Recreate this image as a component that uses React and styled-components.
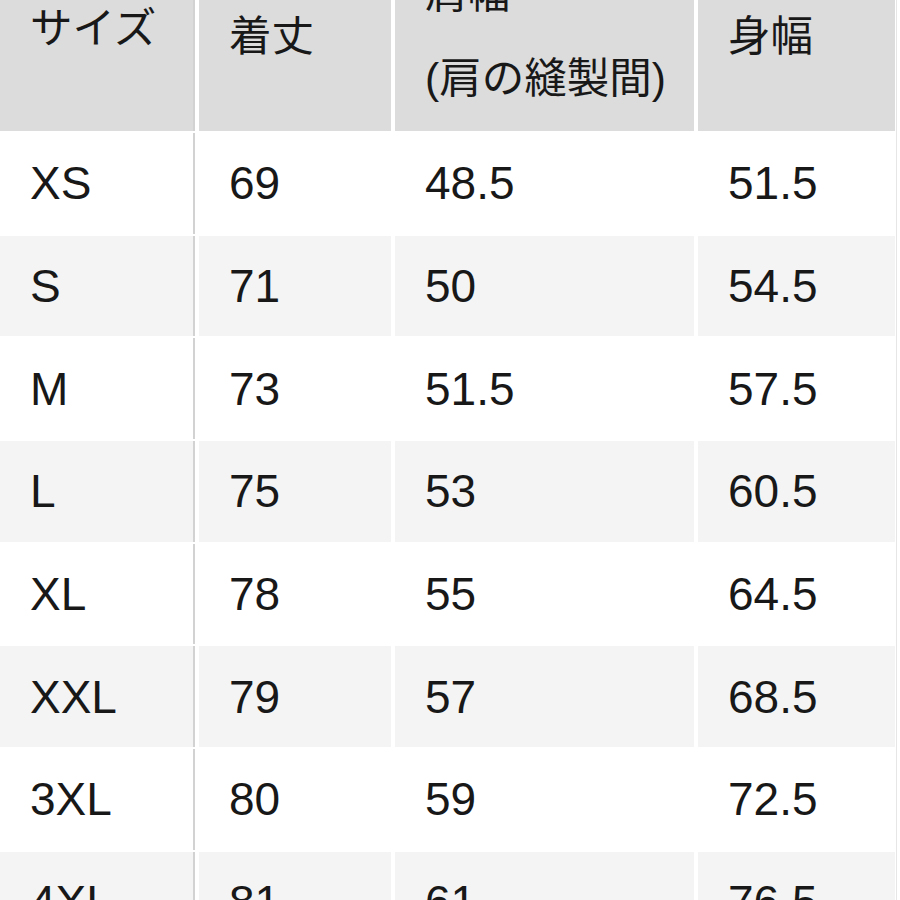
import React from "react";
import styled, { createGlobalStyle } from "styled-components";

const Global = createGlobalStyle`
  html, body { margin: 0; padding: 0; overflow: hidden; background: #ffffff; }
  body { font-family: "Liberation Sans", "Noto Sans CJK JP", sans-serif; color: #161616; }
`;

const Table = styled.div`
  display: grid;
  grid-template-columns: 195px 192px 299px 197px;
  column-gap: 4px;
  row-gap: 2px;
  width: max-content;
  margin-top: -59px;
  padding-right: 1px;
  border-right: 1px solid #e6e6e6;
`;

const HeadCell = styled.div`
  background: #dcdcdc;
  height: 190px;
  box-sizing: border-box;
  display: flex;
  flex-direction: column;
  justify-content: center;
  padding: 0 0 ${(p) => (p.$lift ? "16px" : "0")} 30px;
  font-family: "Liberation Sans", "Noto Sans CJK JP", sans-serif;
  font-size: 42.5px;
  line-height: 85px;
  white-space: nowrap;
  color: #181818;
  ${(p) => (p.$first ? "border-right: 2px solid #d2d2d2;" : "")}
`;

const Cell = styled.div`
  background: ${(p) => (p.$alt ? "#f4f4f4" : "#ffffff")};
  height: 100.7px;
  box-sizing: border-box;
  display: flex;
  align-items: center;
  padding-left: 30px;
  font-size: 46px;
  color: #181818;
  ${(p) => (p.$first ? "border-right: 2px solid #d2d2d2;" : "")}
`;

const headers = [
  { lines: ["サイズ"], lift: true },
  { lines: ["着丈"] },
  { lines: ["肩幅", "(肩の縫製間)"] },
  { lines: ["身幅"] },
];

const rows = [
  ["XS", "69", "48.5", "51.5"],
  ["S", "71", "50", "54.5"],
  ["M", "73", "51.5", "57.5"],
  ["L", "75", "53", "60.5"],
  ["XL", "78", "55", "64.5"],
  ["XXL", "79", "57", "68.5"],
  ["3XL", "80", "59", "72.5"],
  ["4XL", "81", "61", "76.5"],
];

export default function App() {
  return (
    <>
      <Global />
      <Table>
        {headers.map((h, i) => (
          <HeadCell key={i} $first={i === 0} $lift={h.lift}>
            {h.lines.map((l) => (
              <span key={l}>{l}</span>
            ))}
          </HeadCell>
        ))}
        {rows.map((r, ri) =>
          r.map((v, ci) => (
            <Cell key={ri + "-" + ci} $alt={ri % 2 === 1} $first={ci === 0}>
              {v}
            </Cell>
          ))
        )}
      </Table>
    </>
  );
}
